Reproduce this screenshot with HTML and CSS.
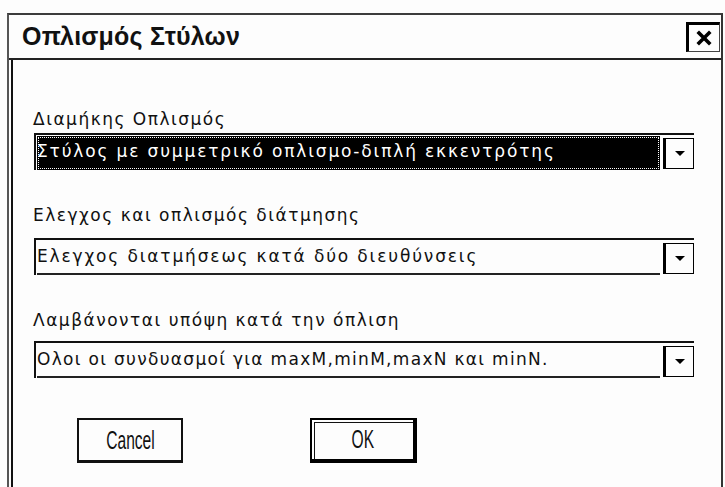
FILE: index.html
```html
<!DOCTYPE html>
<html lang="el">
<head>
<meta charset="utf-8">
<title>Οπλισμός Στύλων</title>
<link rel="stylesheet" href="styles.css">
</head>
<body>
<div class="window">
  <div class="titlebar">
    <span class="title">Οπλισμός Στύλων</span>
    <button class="close" type="button" aria-label="Κλείσιμο">
      <svg width="18" height="18" viewBox="0 0 18 18"><path d="M4 4 L14 14 M14 4 L4 14" stroke="#000" stroke-width="3.6" stroke-linecap="square"/></svg>
    </button>
  </div>
  <div class="panel">
    <div class="field field-first">
      <div class="label">Διαμήκης Οπλισμός</div>
      <div class="combo combo-tight">
        <div class="combo-text selected">Στύλος με συμμετρικό οπλισμο-διπλή εκκεντρότης</div>
        <div class="combo-btn"><span class="arrow"></span></div>
      </div>
    </div>
    <div class="field">
      <div class="label">Ελεγχος και οπλισμός διάτμησης</div>
      <div class="combo">
        <div class="combo-text">Ελεγχος διατμήσεως κατά δύο διευθύνσεις</div>
        <div class="combo-btn"><span class="arrow"></span></div>
      </div>
    </div>
    <div class="field">
      <div class="label">Λαμβάνονται υπόψη κατά την όπλιση</div>
      <div class="combo combo-near">
        <div class="combo-text latin">Ολοι οι συνδυασμοί για maxM,minM,maxN και minN.</div>
        <div class="combo-btn"><span class="arrow"></span></div>
      </div>
    </div>
    <div class="actions">
      <button class="btn" type="button"><span class="btn-label">Cancel</span></button>
      <button class="btn btn-default" type="button"><span class="btn-label">OK</span></button>
    </div>
  </div>
</div>
</body>
</html>
```
FILE: styles.css
```css
html, body {
  margin: 0;
  padding: 0;
  background: #fdfdfd;
  overflow: hidden;
  height: 487px;
}

.window {
  margin: 13px 0 0 7px;
  width: 712px;
  border-top: 2px solid #3c3c3c;
  border-left: 2px solid #555;
  border-right: 2px solid #333;
  background: #fdfdfd;
}

/* title bar */
.titlebar {
  height: 43px;
  border-bottom: 2px solid #222;
  display: flex;
  align-items: center;
  justify-content: space-between;
  padding-left: 13px;
}

.title {
  font-family: "Liberation Sans", Arial, sans-serif;
  font-weight: bold;
  font-size: 25px;
  letter-spacing: 0.2px;
  color: #111;
}

.close {
  width: 34px;
  height: 30px;
  margin-right: 1px;
  padding: 0;
  background: #fdfdfd;
  border-top: 3px solid #000;
  border-left: 3px solid #000;
  border-right: 1px solid #444;
  border-bottom: 1px solid #444;
  display: flex;
  align-items: center;
  justify-content: center;
}

/* dialog content */
.panel {
  margin-left: 2px;
  border-left: 2px solid #111;
  padding: 49px 27px 0 20px;
  height: 378px;
  font-family: "DejaVu Sans", Verdana, sans-serif;
  color: #111;
}

.field { margin-top: 35px; }
.field-first { margin-top: 0; }

.label {
  font-size: 17px;
  line-height: 20px;
  letter-spacing: 1.5px;
}

.combo {
  margin-top: 13px;
  margin-left: 1px;
  height: 35px;
  display: flex;
  border-top: 2px solid #111;
  border-left: 2px solid #111;
}
.combo-tight { margin-top: 4px; }
.combo-near { margin-top: 11px; }

.combo-text {
  flex: 1;
  margin: 1px 0 0 1px;
  border-bottom: 2px solid #222;
  font-size: 17px;
  letter-spacing: 1.85px;
  line-height: 31px;
  white-space: nowrap;
  overflow: hidden;
}
.combo-text.latin { letter-spacing: 1.3px; }

.combo-text.selected {
  background: #000;
  color: #fff;
  outline: 1px dotted #fff;
  outline-offset: -2px;
  border-bottom-color: #000;
}

.combo-btn {
  width: 27px;
  margin: 3px 0 1px 3px;
  border-top: 1px solid #000;
  border-left: 3px solid #000;
  border-right: 1px solid #000;
  border-bottom: 1px solid #000;
  display: flex;
  align-items: center;
  justify-content: center;
}

.arrow {
  width: 0;
  height: 0;
  border-left: 5px solid transparent;
  border-right: 5px solid transparent;
  border-top: 5px solid #000;
}

/* buttons */
.actions {
  display: flex;
  gap: 127px;
  margin-top: 40px;
  padding-left: 44px;
}

.btn {
  width: 106px;
  height: 45px;
  padding: 0;
  background: #fdfdfd;
  border-top: 2px solid #111;
  border-left: 2px solid #111;
  border-right: 2px solid #111;
  border-bottom: 3px solid #111;
  display: flex;
  align-items: center;
  justify-content: center;
  font-family: "Liberation Sans", Arial, sans-serif;
  font-size: 26px;
  color: #111;
}

.btn-default {
  width: 107px;
  border: 2px solid #000;
  border-right-width: 4px;
  border-bottom-width: 4px;
  box-shadow: inset 2px 2px 0 #fdfdfd, inset 3px 3px 0 #111;
}

.btn-label {
  display: inline-block;
  transform: scaleX(0.6);
}
```
